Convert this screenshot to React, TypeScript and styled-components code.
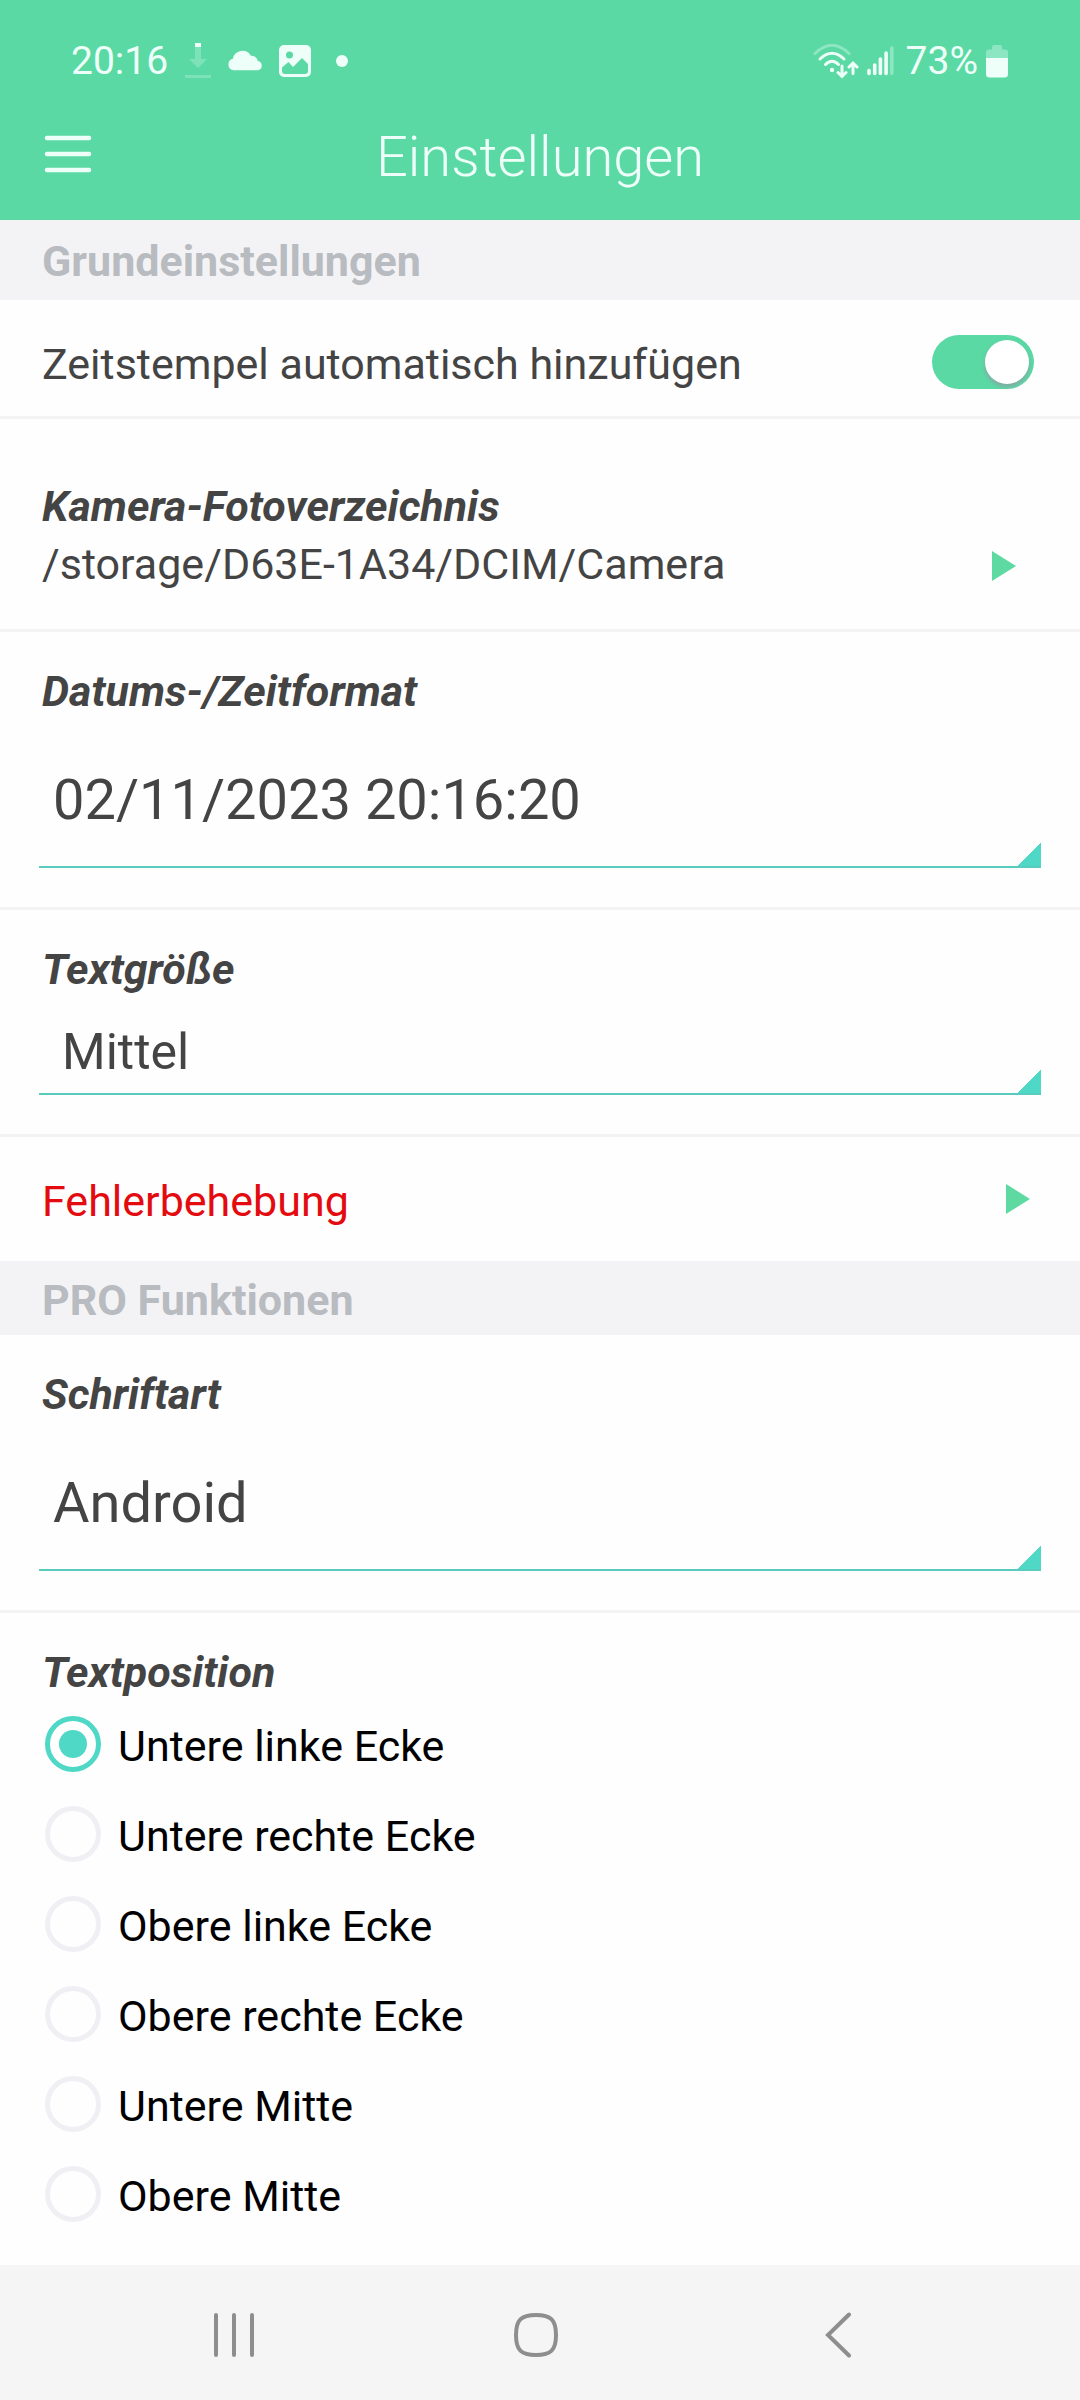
import React, { useState } from "react";
import styled, { createGlobalStyle } from "styled-components";

const green = "#5ad9a5";
const teal = "#50d8c7";
const ink = "#444444";
const bright = "#edfff8";

const GlobalStyle = createGlobalStyle`
  *, *::before, *::after { box-sizing: border-box; }
  body { margin: 0; background: #fefefe; font-family: Roboto, "Noto Sans", sans-serif; }
`;

const Screen = styled.div`
  display: flex;
  flex-direction: column;
  min-height: 100vh;
`;

const Header = styled.header`
  background: ${green};
  color: ${bright};
`;

const StatusBar = styled.div`
  display: flex;
  justify-content: space-between;
  padding: 34px 72px 0 71px;
  font-size: 39px;
  line-height: 54px;
`;

const StatusGroup = styled.div<{ $gap: number }>`
  display: flex;
  align-items: center;
  gap: ${(p) => p.$gap}px;
  svg { display: block; flex: none; }
`;

const AppBar = styled.div`
  display: grid;
  grid-template-columns: 1fr auto 1fr;
  align-items: center;
  height: 132px;
  padding: 0 44px;
`;

const Title = styled.h1`
  margin: 0;
  padding-top: 6px;
  font-size: 56px;
  font-weight: 300;
  line-height: 66px;
`;

const IconButton = styled.button`
  display: flex;
  justify-self: start;
  padding: 0;
  border: 0;
  background: none;
  color: inherit;
  svg { display: block; }
`;

const SectionTitle = styled.h2<{ $compact?: boolean }>`
  margin: 0;
  padding: ${(p) => (p.$compact ? "14px 42px 10px" : "16px 42px 14px")};
  background: #f3f3f5;
  color: #b8bbbf;
  font-size: 43px;
  font-weight: 700;
  line-height: 50px;
`;

const Row = styled.div<{ $bottom: number; $right: number; $plain?: boolean }>`
  display: flex;
  align-items: flex-start;
  justify-content: space-between;
  padding: 35px ${(p) => p.$right}px ${(p) => p.$bottom}px 42px;
  border-bottom: ${(p) => (p.$plain ? "0" : "3px solid #f3f3f3")};
`;

const RowText = styled.label<{ $alert?: boolean }>`
  color: ${(p) => (p.$alert ? "#e30b0f" : ink)};
  font-size: 43px;
  line-height: 58px;
`;

const Switch = styled.input`
  appearance: none;
  display: flex;
  align-items: center;
  width: 102px;
  height: 54px;
  margin: 0;
  padding: 0 5px;
  border-radius: 27px;
  background: #d5d5da;
  &:checked {
    justify-content: flex-end;
    background: ${green};
  }
  &::before {
    content: "";
    width: 44px;
    height: 44px;
    border-radius: 50%;
    background: #ffffff;
    box-shadow: 0 3px 4px rgba(160, 135, 160, 0.6);
  }
`;

const PathRow = styled.div`
  display: flex;
  align-items: flex-end;
  justify-content: space-between;
  padding: 58px 64px 36px 42px;
  border-bottom: 3px solid #f3f3f3;
  color: ${ink};
  font-size: 43px;
  line-height: 58px;
`;

const PathName = styled.div`
  font-style: italic;
  font-weight: 700;
`;

const ArrowButton = styled.button`
  display: flex;
  align-items: center;
  height: 54px;
  padding: 0;
  border: 0;
  background: none;
  color: #5ed9a2;
  svg { display: block; }
`;

const Field = styled.div`
  padding: 34px 39px 39px;
  border-bottom: 3px solid #f3f3f3;
`;

const FieldLabel = styled.label`
  display: block;
  margin: 0 3px 18px;
  color: ${ink};
  font-size: 43px;
  font-style: italic;
  font-weight: 700;
  line-height: 50px;
`;

const Select = styled.select<{ $small?: boolean }>`
  appearance: none;
  display: block;
  width: 100%;
  height: ${(p) => (p.$small ? 83 : 134)}px;
  padding: ${(p) => (p.$small ? "0 40px 2px 23px" : "0 40px 0 14px")};
  border: 0;
  border-bottom: 2px solid #5accbf;
  border-radius: 0;
  background: linear-gradient(to bottom right, transparent 50%, ${teal} 50%)
    right bottom / 25px 26px no-repeat border-box;
  color: ${ink};
  font-family: inherit;
  font-size: ${(p) => (p.$small ? 50 : 56)}px;
`;

const Choices = styled.fieldset`
  margin: 0;
  padding: 34px 42px 25px;
  border: 0;
  min-width: 0;
`;

const Legend = styled.legend`
  float: left;
  width: 100%;
  padding: 0 0 2px;
  color: ${ink};
  font-size: 43px;
  font-style: italic;
  font-weight: 700;
  line-height: 50px;
`;

const Choice = styled.label`
  clear: both;
  display: flex;
  align-items: center;
  gap: 17px;
  height: 90px;
  padding-left: 3px;
  color: #000000;
  font-size: 43px;
  line-height: 50px;
`;

const ChoiceText = styled.span`
  padding-top: 3px;
`;

const Radio = styled.input`
  appearance: none;
  display: grid;
  place-items: center;
  width: 56px;
  height: 56px;
  margin: 0;
  border: 5px solid #f0eff4;
  border-radius: 50%;
  &:checked { border-color: ${teal}; }
  &:checked::before {
    content: "";
    width: 28px;
    height: 28px;
    border-radius: 50%;
    background: ${teal};
  }
`;

const NavBar = styled.nav`
  display: grid;
  grid-template-columns: repeat(3, 1fr);
  height: 135px;
  margin-top: auto;
  padding: 4px 91px 0 83px;
  background: #f5f5f5;
`;

const NavButton = styled.button`
  display: flex;
  align-items: center;
  justify-content: center;
  padding: 0;
  border: 0;
  background: none;
  color: #8e8e8e;
  svg { display: block; }
`;

const Arrow = () => (
  <svg width="24" height="30" viewBox="0 0 24 30" fill="currentColor" aria-hidden="true">
    <path d="M0 0 24 15 0 30Z" />
  </svg>
);

const DownloadIcon = () => (
  <svg width="28" height="36" viewBox="-1 0 28 36" aria-hidden="true">
    <path d="M10 4h6v12h6l-9 9-9-9h6z" fill={bright} opacity=".25" />
    <path d="M10 0h6v4h-6z" fill={bright} />
    <path d="M0 32h26v3H0z" fill={bright} opacity=".25" />
  </svg>
);

const CloudIcon = () => (
  <svg width="35" height="35" viewBox="0 0 36 36" fill="currentColor" aria-hidden="true">
    <path d="M6 27a6 6 0 0 1-1-11.800A10 10 0 0 1 23.500 12a7 7 0 0 1 7.200 5.600A4.800 4.800 0 0 1 31 27Z" />
  </svg>
);

const PictureIcon = () => (
  <svg width="32" height="32" viewBox="0 0 32 32" aria-hidden="true">
    <rect width="32" height="32" rx="5" fill={bright} />
    <circle cx="10.500" cy="10" r="3.500" fill={green} />
    <path d="M3 22.500 9.500 17l4.500 5 9-9 6 6v7a3 3 0 0 1-3 3H6a3 3 0 0 1-3-3Z" fill={green} />
  </svg>
);

const DotIcon = () => (
  <svg width="23" height="12" viewBox="0 0 23 12" fill="currentColor" aria-hidden="true">
    <circle cx="15" cy="6" r="6" />
  </svg>
);

const WifiIcon = () => (
  <svg width="46" height="36" viewBox="0 0 46 36" fill="none" stroke="currentColor" strokeWidth="3" strokeLinecap="round" aria-hidden="true">
    <path d="M2 10.500Q19 -6 36 10.500" opacity=".35" />
    <path d="M7 16Q19 4.500 31 16M12.500 21.500Q19 15 25.500 21.500" />
    <circle cx="19" cy="27" r="2.200" fill="currentColor" stroke="none" />
    <path d="M29 23v10M25 29.500l4 4 4-4M40 30.500v-10M36 24l4-4 4 4" />
  </svg>
);

const SignalIcon = () => (
  <svg width="31" height="30" viewBox="0 0 31 30" stroke="currentColor" strokeWidth="3.600" strokeLinecap="round" aria-hidden="true">
    <path d="M2 24.500v3M7.700 19v8.500M13.400 13v14.500M19.100 7v20.500" />
    <path d="M24.800 2v25.500" opacity=".35" />
  </svg>
);

const BatteryIcon = () => (
  <svg width="22" height="33" viewBox="0 0 22 33" fill="currentColor" aria-hidden="true">
    <path d="M6 2a2 2 0 0 1 2-2h6a2 2 0 0 1 2 2v2.500h3a3 3 0 0 1 3 3V13H0V7.500a3 3 0 0 1 3-3h3Z" opacity=".35" />
    <path d="M0 13h22v16a3.500 3.500 0 0 1-3.500 3.500h-15A3.500 3.500 0 0 1 0 29Z" />
  </svg>
);

const MenuIcon = () => (
  <svg width="48" height="40" viewBox="0 0 48 40" stroke="currentColor" strokeWidth="4.500" strokeLinecap="round" aria-hidden="true">
    <path d="M3 4h42M3 20h42M3 36h42" />
  </svg>
);

const positions = [
  "Untere linke Ecke",
  "Untere rechte Ecke",
  "Obere linke Ecke",
  "Obere rechte Ecke",
  "Untere Mitte",
  "Obere Mitte",
];

export default function App() {
  const [position, setPosition] = useState(positions[0]);
  const [stamp, setStamp] = useState(true);

  return (
    <>
      <GlobalStyle />
      <Screen>
        <Header>
          <StatusBar>
            <StatusGroup $gap={16}>
              <span>20:16</span>
              <DownloadIcon />
              <CloudIcon />
              <PictureIcon />
              <DotIcon />
            </StatusGroup>
            <StatusGroup $gap={8}>
              <WifiIcon />
              <SignalIcon />
              <span>73%</span>
              <BatteryIcon />
            </StatusGroup>
          </StatusBar>
          <AppBar>
            <IconButton type="button" aria-label="Menü">
              <MenuIcon />
            </IconButton>
            <Title>Einstellungen</Title>
          </AppBar>
        </Header>

        <main>
          <SectionTitle>Grundeinstellungen</SectionTitle>
          <Row $bottom={23} $right={46}>
            <RowText htmlFor="stamp">Zeitstempel automatisch hinzufügen</RowText>
            <Switch
              id="stamp"
              type="checkbox"
              checked={stamp}
              onChange={(e) => setStamp(e.target.checked)}
            />
          </Row>
          <PathRow>
            <div>
              <PathName id="folder">Kamera-Fotoverzeichnis</PathName>
              <div>/storage/D63E-1A34/DCIM/Camera</div>
            </div>
            <ArrowButton type="button" aria-labelledby="folder">
              <Arrow />
            </ArrowButton>
          </PathRow>
          <Field>
            <FieldLabel htmlFor="format">Datums-/Zeitformat</FieldLabel>
            <Select id="format">
              <option>02/11/2023 20:16:20</option>
            </Select>
          </Field>
          <Field>
            <FieldLabel htmlFor="size">Textgröße</FieldLabel>
            <Select id="size" $small>
              <option>Mittel</option>
            </Select>
          </Field>
          <Row $bottom={31} $right={50} $plain>
            <RowText htmlFor="repair" $alert>
              Fehlerbehebung
            </RowText>
            <ArrowButton id="repair" type="button">
              <Arrow />
            </ArrowButton>
          </Row>

          <SectionTitle $compact>PRO Funktionen</SectionTitle>
          <Field>
            <FieldLabel htmlFor="font">Schriftart</FieldLabel>
            <Select id="font">
              <option>Android</option>
            </Select>
          </Field>
          <Choices>
            <Legend>Textposition</Legend>
            {positions.map((name) => (
              <Choice key={name}>
                <Radio
                  type="radio"
                  name="position"
                  checked={position === name}
                  onChange={() => setPosition(name)}
                />
                <ChoiceText>{name}</ChoiceText>
              </Choice>
            ))}
          </Choices>
        </main>

        <NavBar>
          <NavButton type="button" aria-label="Letzte Apps">
            <svg width="42" height="46" viewBox="0 0 42 46" stroke="currentColor" strokeWidth="4" strokeLinecap="round" aria-hidden="true">
              <path d="M3 3v40M21 3v40M39 3v40" />
            </svg>
          </NavButton>
          <NavButton type="button" aria-label="Startseite">
            <svg width="46" height="46" viewBox="0 0 46 46" fill="none" stroke="currentColor" strokeWidth="4" aria-hidden="true">
              <path d="M23 3C38 3 43 8 43 23S38 43 23 43 3 38 3 23 8 3 23 3Z" />
            </svg>
          </NavButton>
          <NavButton type="button" aria-label="Zurück">
            <svg width="28" height="46" viewBox="0 0 28 46" fill="none" stroke="currentColor" strokeWidth="4" strokeLinecap="round" aria-hidden="true">
              <path d="M25 2.500 4 23l21 20.500" />
            </svg>
          </NavButton>
        </NavBar>
      </Screen>
    </>
  );
}
